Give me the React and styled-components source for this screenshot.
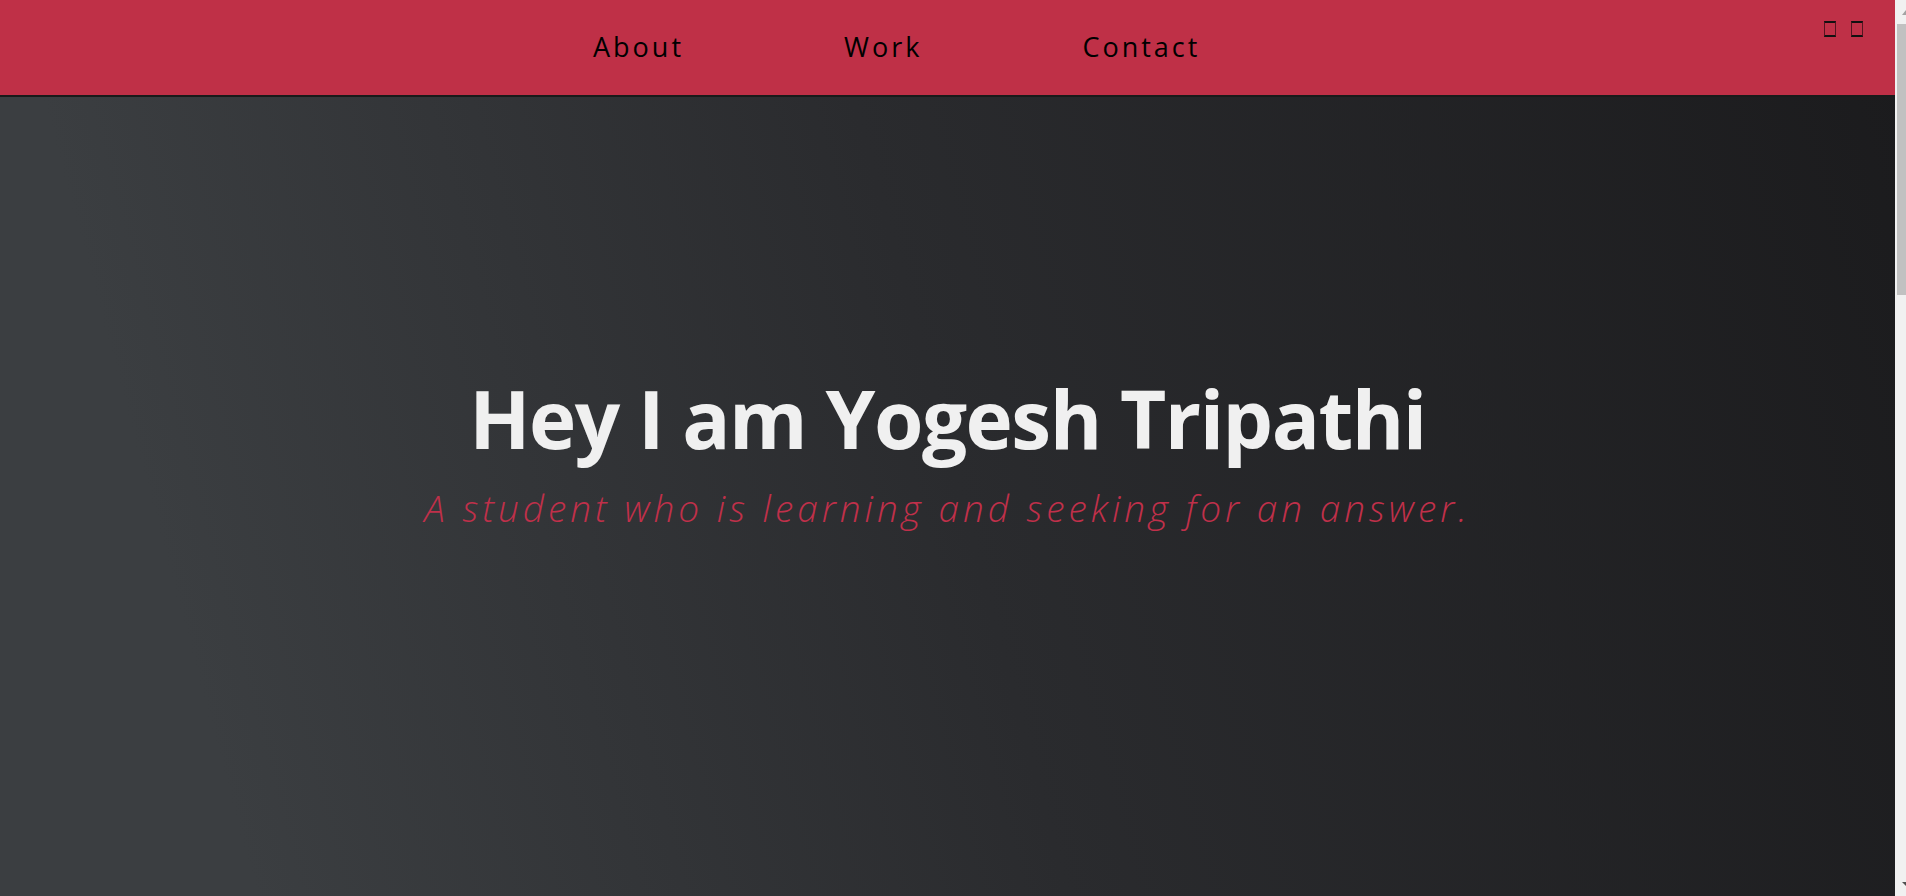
import React from "react";
import styled, { createGlobalStyle } from "styled-components";

const GlobalStyle = createGlobalStyle`
  * {
    box-sizing: border-box;
  }
  html, body {
    margin: 0;
    height: 100%;
    overflow: hidden;
    background: #1c1c1e;
    font-family: "Open Sans", sans-serif;
  }
`;

// window: page content + the browser scrollbar drawn at the right
const Shell = styled.div`
  display: flex;
  height: 100vh;
`;

const Page = styled.div`
  flex: 1;
  min-width: 0;
  overflow-y: scroll;
  scrollbar-width: none;
  &::-webkit-scrollbar {
    display: none;
  }
`;

const ScrollTrack = styled.div`
  width: 11px;
  flex-shrink: 0;
  background: #f1f1f1;
  display: flex;
  flex-direction: column;
  align-items: flex-end;
`;

const Arrow = styled.span`
  width: 0;
  height: 0;
  border-left: 4px solid transparent;
  ${(p) =>
    p.down
      ? "border-top: 4px solid #505050; margin: auto 0 10px;"
      : "border-bottom: 5px solid #a3a3a3; margin: 10px 0 9px;"}
`;

const Thumb = styled.div`
  width: 9px;
  height: 271px;
  background: #c1c1c1;
`;

// Hero with the navbar lying over its top
const Hero = styled.section`
  position: relative;
  height: 100vh;
  background: linear-gradient(75deg, #3b3e41 12%, #2a2b2e 50%, #1b1b1d 100%);
  display: flex;
  flex-direction: column;
  align-items: center;
  justify-content: center;
  padding-top: 10px;
`;

const Navbar = styled.header`
  position: absolute;
  top: 0;
  left: 0;
  right: 0;
  height: 95px;
  background: #bf3047;
  box-shadow: 0 2px 0 #1a1a1a;
  display: flex;
  align-items: center;
  padding-left: 593px;
  padding-right: 32px;
`;

const NavList = styled.ul`
  display: flex;
  align-items: center;
  gap: 160px;
  list-style: none;
  margin: 0 0 3px;
  padding: 0;
  flex: 1;
`;

const NavLink = styled.a`
  font-family: "Open Sans", sans-serif;
  font-weight: 400;
  font-size: 27px;
  letter-spacing: 3px;
  color: #000;
  text-decoration: none;
`;

const Socials = styled.div`
  display: flex;
  gap: 15px;
  align-self: flex-start;
  margin-top: 21px;
`;

const MissingIcon = styled.span`
  display: block;
  width: 12px;
  height: 16px;
  border: 1px solid rgba(0, 0, 0, 0.55);
  border-top: 2px solid #111;
  border-bottom: 2px solid #111;
`;

const Title = styled.h1`
  margin: 0;
  font-family: "Open Sans", sans-serif;
  font-weight: 700;
  font-size: 80px;
  line-height: 1.2;
  letter-spacing: -1.5px;
  color: #f0f0f0;
`;

const Subtitle = styled.p`
  margin: 14px 0 0;
  font-family: "Open Sans", sans-serif;
  font-weight: 300;
  font-style: italic;
  font-size: 37px;
  letter-spacing: 4px;
  line-height: 1.5;
  color: #c0304a;
`;

// Sections below the fold
const Section = styled.section`
  height: 640px;
  background: ${(p) => (p.alt ? "#232426" : "#1c1c1e")};
`;

const links = ["About", "Work", "Contact"];

const App = () => {
  return (
    <Shell>
      <GlobalStyle />
      <Page>
        <Hero>
          <Navbar>
            <NavList>
              {links.map((l) => (
                <li key={l}>
                  <NavLink href={`#${l.toLowerCase()}`}>{l}</NavLink>
                </li>
              ))}
            </NavList>
            <Socials>
              <MissingIcon />
              <MissingIcon />
            </Socials>
          </Navbar>
          <Title>Hey I am Yogesh Tripathi</Title>
          <Subtitle>A student who is learning and seeking for an answer.</Subtitle>
        </Hero>

        <Section id="about" alt />
        <Section id="work" />
        <Section id="contact" alt />
      </Page>
      <ScrollTrack>
        <Arrow />
        <Thumb />
        <Arrow down />
      </ScrollTrack>
    </Shell>
  );
};

export default App;
